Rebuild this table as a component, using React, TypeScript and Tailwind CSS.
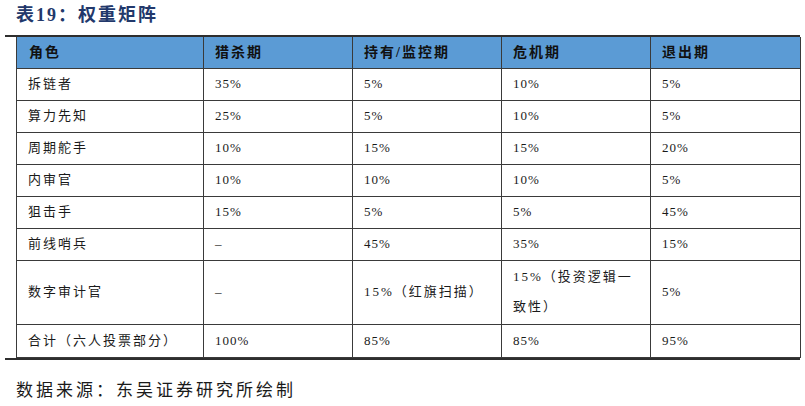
import React from "react";

const rows: { cells: string[][]; tall?: boolean }[] = [
  { cells: [["拆链者"], ["35%"], ["5%"], ["10%"], ["5%"]] },
  { cells: [["算力先知"], ["25%"], ["5%"], ["10%"], ["5%"]] },
  { cells: [["周期舵手"], ["10%"], ["15%"], ["15%"], ["20%"]] },
  { cells: [["内审官"], ["10%"], ["10%"], ["10%"], ["5%"]] },
  { cells: [["狙击手"], ["15%"], ["5%"], ["5%"], ["45%"]] },
  { cells: [["前线哨兵"], ["–"], ["45%"], ["35%"], ["15%"]] },
  {
    cells: [["数字审计官"], ["–"], ["15%（红旗扫描）"], ["15%（投资逻辑一", "致性）"], ["5%"]],
    tall: true,
  },
  { cells: [["合计（六人投票部分）"], ["100%"], ["85%"], ["85%"], ["95%"]] },
];

const headers = ["角色", "猎杀期", "持有/监控期", "危机期", "退出期"];

const isAscii = (s: string) => /^[\x00-\x7f–]+$/.test(s);

export default function App() {
  return (
    <div
      className="w-[805px] h-[406px] bg-white relative overflow-hidden"
      style={{ fontFamily: '"Liberation Serif", "Noto Sans CJK SC", serif' }}
    >
      <div className="pl-[16px] pt-[3px] h-[35px] text-[18px] leading-[24px] font-bold tracking-[2px] text-[#22386b]">
        表19：权重矩阵
      </div>
      <div className="ml-[5px] w-[795px] h-[2px] bg-[#2e2e2e]" />
      <div className="ml-[16px] w-[784px]">
        <table className="table-fixed border-collapse w-[784px] text-[13px] text-[#1a1a1a]">
          <colgroup>
            <col className="w-[187px]" />
            <col className="w-[149px]" />
            <col className="w-[149px]" />
            <col className="w-[149px]" />
            <col className="w-[150px]" />
          </colgroup>
          <thead>
            <tr className="h-[31px] bg-[#5b9bd5]">
              {headers.map((h, i) => (
                <th
                  key={i}
                  className={`border-x border-b border-[#3a3a3a] text-left font-bold text-[14px] tracking-[2px] text-[#111] ${
                    i === 0 ? "pl-[12px]" : "pl-[11px]"
                  }`}
                >
                  {h}
                </th>
              ))}
            </tr>
          </thead>
          <tbody>
            {rows.map((r, ri) => (
              <tr
                key={ri}
                className={r.tall ? "h-[64px]" : ri === rows.length - 1 ? "h-[33px]" : "h-[32px]"}
              >
                {r.cells.map((c, ci) => (
                  <td
                    key={ci}
                    className={`border border-[#3a3a3a] align-middle pl-[11px] ${
                      c.length === 1 && isAscii(c[0]) ? "tracking-[1px]" : "tracking-[2px]"
                    } ${c.length > 1 ? "leading-[30px]" : "leading-[20px]"}`}
                  >
                    {c.map((line, li) => (
                      <div key={li}>{line}</div>
                    ))}
                  </td>
                ))}
              </tr>
            ))}
          </tbody>
        </table>
      </div>
      <div className="ml-[5px] w-[795px] h-[2px] bg-[#2e2e2e]" />
      <div className="pl-[16px] pt-[19px] text-[17px] leading-[24px] tracking-[3px] text-[#1a1a1a]">
        数据来源：东吴证券研究所绘制
      </div>
    </div>
  );
}
